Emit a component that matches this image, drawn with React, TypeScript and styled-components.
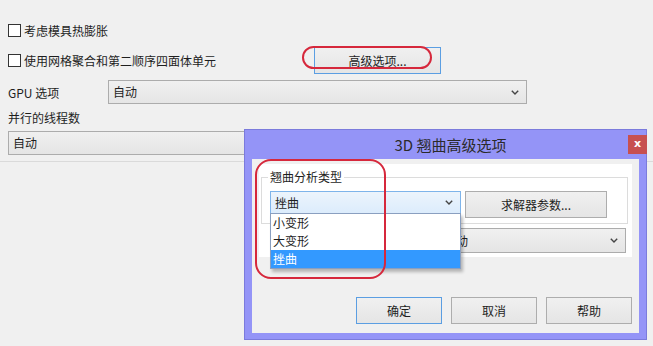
import React from "react";
import styled, { createGlobalStyle } from "styled-components";

const Global = createGlobalStyle`
  html, body { margin: 0; padding: 0; background: #f0f0f0; }
  body { font-family: "Noto Sans CJK SC", "Noto Sans", sans-serif; font-size: 12px; color: #1e1e1e; }
  * { box-sizing: border-box; }
`;

const Page = styled.div`
  position: relative;
  width: 653px;
  height: 346px;
  overflow: hidden;
  background: #f0f0f0;
  padding-left: 8px;
`;

const Box = styled.span`
  display: inline-block;
  width: 13px;
  height: 13px;
  border: 1px solid #333;
  background: #fff;
  flex: none;
`;

const CheckRow = styled.label<{ $top: number }>`
  display: flex;
  align-items: center;
  gap: 3px;
  height: 17px;
  margin-top: ${(p) => p.$top}px;
  line-height: 16px;
`;

const Row2 = styled.div`
  display: grid;
  grid-template-columns: 306px 127px;
  align-items: center;
  height: 27px;
  margin-top: 8px;
`;

const Row3 = styled.div`
  display: grid;
  grid-template-columns: 100px 419px;
  align-items: center;
  height: 24px;
  margin-top: 6px;
`;

const Label = styled.div<{ $top?: number }>`
  line-height: 16px;
  height: 16px;
  margin-top: ${(p) => p.$top ?? 0}px;
`;

const Select = styled.div<{ $w: number; $h?: number; $top?: number; $left?: number; $focus?: boolean }>`
  display: flex;
  align-items: center;
  justify-content: space-between;
  width: ${(p) => p.$w}px;
  height: ${(p) => p.$h ?? 24}px;
  margin-top: ${(p) => p.$top ?? 0}px;
  margin-left: ${(p) => p.$left ?? 0}px;
  padding: 0 7px 0 4px;
  border: 1px solid ${(p) => (p.$focus ? "#7eb4ea" : "#acacac")};
  background: ${(p) =>
    p.$focus ? "linear-gradient(#ecf4fc, #dcecfc)" : "linear-gradient(#f0f0f0, #e5e5e5)"};
  line-height: 16px;
  position: relative;
  flex: none;
`;

const Button = styled.div<{ $w: number; $h?: number; $focus?: boolean }>`
  display: flex;
  align-items: center;
  justify-content: center;
  width: ${(p) => p.$w}px;
  height: ${(p) => p.$h ?? 27}px;
  border: 1px solid ${(p) => (p.$focus ? "#5b9ee2" : "#adadad")};
  background: linear-gradient(#f0f0f0, #e5e5e5);
  line-height: 16px;
  flex: none;
`;

const Divider = styled.div`
  height: 1px;
  margin: 6px 0 0 -8px;
  width: 653px;
  background: #dadada;
`;

const Dialog = styled.div`
  position: absolute;
  left: 244px;
  top: 129px;
  width: 403px;
  height: 211px;
  background: #9494f7;
  border: 1px solid #7b7bdc;
`;

const TitleBar = styled.div`
  position: relative;
  height: 29px;
  display: flex;
  align-items: center;
  justify-content: center;
  padding-left: 10px;
  font-size: 15px;
  color: #2a2a2a;
`;

const Close = styled.div`
  position: absolute;
  right: -1px;
  top: 5px;
  width: 19px;
  height: 19px;
  background: #c75050;
  color: #fff;
  font-family: "DejaVu Sans", sans-serif;
  font-weight: bold;
  font-size: 11px;
  line-height: 17px;
  text-align: center;
`;

const Client = styled.div`
  margin: 0 7px;
  height: 174px;
  background: #f0f0f0;
  padding: 5px 7px 0 7px;
`;

const Panel = styled.div`
  height: 93px;
  background: #fff;
  padding: 13px 0 0 2px;
`;

const Group = styled.div`
  position: relative;
  width: 367px;
  height: 47px;
  border: 1px solid #dcdcdc;
  padding: 13px 0 0 8px;
  display: flex;
  align-items: flex-start;
  gap: 4px;
`;

const Legend = styled.div`
  position: absolute;
  left: 6px;
  top: -9px;
  padding: 0 2px;
  background: #fff;
  line-height: 16px;
`;

const ComboWrap = styled.div`
  position: relative;
`;

const DropList = styled.div`
  position: absolute;
  left: 0;
  top: 22px;
  width: 191px;
  border: 1px solid #8a9fc0;
  background: #fff;
  box-shadow: 2px 3px 3px rgba(0, 0, 0, 0.25);
  z-index: 2;
`;

const Item = styled.div<{ $sel?: boolean }>`
  height: 18px;
  line-height: 18px;
  padding-left: 2px;
  background: ${(p) => (p.$sel ? "#3399ff" : "#fff")};
  color: ${(p) => (p.$sel ? "#fff" : "#1e1e1e")};
`;

const Buttons = styled.div`
  display: flex;
  justify-content: flex-end;
  gap: 9px;
  margin-top: 40px;
`;

const Mark = styled.div<{ $l: number; $t: number; $w: number; $h: number; $r: number }>`
  position: absolute;
  left: ${(p) => p.$l}px;
  top: ${(p) => p.$t}px;
  width: ${(p) => p.$w}px;
  height: ${(p) => p.$h}px;
  border: 2px solid #d6283c;
  border-radius: ${(p) => p.$r}px;
  pointer-events: none;
  z-index: 5;
`;

const Chevron = () => (
  <svg width="8" height="5" viewBox="0 0 8 5">
    <path d="M0.8 0.8 L4 4 L7.2 0.8" fill="none" stroke="#444" strokeWidth="1.4" />
  </svg>
);

export default function App() {
  return (
    <>
      <Global />
      <Page>
        <CheckRow $top={22}>
          <Box />
          <span>考虑模具热膨胀</span>
        </CheckRow>
        <Row2>
          <CheckRow $top={0}>
            <Box />
            <span>使用网格聚合和第二顺序四面体单元</span>
          </CheckRow>
          <Button $w={127} $focus>
            高级选项...
          </Button>
        </Row2>
        <Row3>
          <span>GPU 选项</span>
          <Select $w={419}>
            <span>自动</span>
            <Chevron />
          </Select>
        </Row3>
        <Label $top={6}>并行的线程数</Label>
        <Select $w={620} $top={5}>
          <span>自动</span>
          <Chevron />
        </Select>
        <Divider />

        <Dialog>
          <TitleBar>
            3D 翘曲高级选项
            <Close>x</Close>
          </TitleBar>
          <Client>
            <Panel>
              <Group>
                <Legend>翘曲分析类型</Legend>
                <ComboWrap>
                  <Select $w={191} $h={23} $focus>
                    <span>挫曲</span>
                    <Chevron />
                  </Select>
                  <DropList>
                    <Item>小变形</Item>
                    <Item>大变形</Item>
                    <Item $sel>挫曲</Item>
                  </DropList>
                </ComboWrap>
                <Button $w={142}>求解器参数...</Button>
              </Group>
              <Select $w={187} $h={25} $top={4} $left={178}>
                <span>自动</span>
                <Chevron />
              </Select>
            </Panel>
            <Buttons>
              <Button $w={86} $focus>确定</Button>
              <Button $w={86}>取消</Button>
              <Button $w={86}>帮助</Button>
            </Buttons>
          </Client>
        </Dialog>

        <Mark $l={302} $t={46} $w={130} $h={23} $r={12} />
        <Mark $l={255} $t={159} $w={131} $h={120} $r={16} />
      </Page>
    </>
  );
}
